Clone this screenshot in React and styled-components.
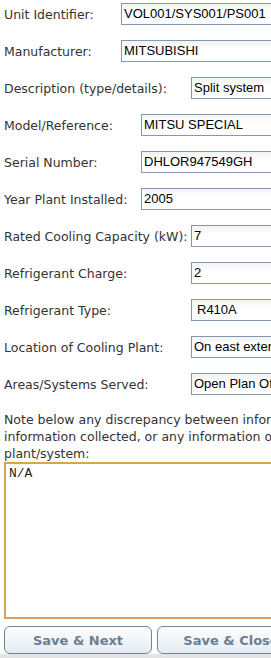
import React from 'react'
import styled, { createGlobalStyle } from 'styled-components'

const GlobalStyle = createGlobalStyle`
html, body {
  margin: 0;
  padding: 0;
  background: #fff;
  overflow: hidden;
}
body {
  font-family: "DejaVu Sans", Verdana, sans-serif;
  color: #333;
}
`

const fields = [
  { label: 'Unit Identifier:', value: 'VOL001/SYS001/PS001', at: 121 },
  { label: 'Manufacturer:', value: 'MITSUBISHI', at: 121 },
  { label: 'Description (type/details):', value: 'Split system', at: 191 },
  { label: 'Model/Reference:', value: 'MITSU SPECIAL', at: 141 },
  { label: 'Serial Number:', value: 'DHLOR947549GH', at: 141 },
  { label: 'Year Plant Installed:', value: '2005', at: 141 },
  { label: 'Rated Cooling Capacity (kW):', value: '7', at: 191 },
  { label: 'Refrigerant Charge:', value: '2', at: 191 },
  { label: 'Refrigerant Type:', value: 'R410A', at: 191, pad: 5 },
  { label: 'Location of Cooling Plant:', value: 'On east external wall', at: 191 },
  { label: 'Areas/Systems Served:', value: 'Open Plan Office', at: 191 }
]

export default function App () {
  return (
    <Page>
      <GlobalStyle />
      <Form>
        <Rows>
          {fields.map(f => (
            <Row key={f.label}>
              <Label width={f.at}>{f.label}</Label>
              <Field pad={f.pad}>{f.value}</Field>
            </Row>
          ))}
        </Rows>
        <Note>
          Note below any discrepancy between information provided and<br />
          information collected, or any information of relevance to this<br />
          plant/system:
        </Note>
        <Notes defaultValue='N/A' />
        <Buttons>
          <Button>Save &amp; Next</Button>
          <Button>Save &amp; Close</Button>
        </Buttons>
      </Form>
      <Footer />
    </Page>
  )
}

const Page = styled.div`
width: 271px;
height: 658px;
overflow: hidden;
display: flex;
flex-direction: column;
`
const Form = styled.div`
padding: 3px 0 0 4px;
width: 460px;
flex: 1;
`
const Rows = styled.div`
display: flex;
flex-direction: column;
gap: 15px;
`
const Row = styled.div`
display: flex;
align-items: center;
height: 22px;
`
const Label = styled.span`
width: ${props => props.width - 4}px;
flex-shrink: 0;
font-size: 12.5px;
color: #333;
white-space: nowrap;
`
const Field = styled.div`
width: 220px;
height: 22px;
box-sizing: border-box;
border: 1px solid #8399b1;
background: linear-gradient(#f3f3f3, #fff 40%);
font-family: "Liberation Sans", Arial, sans-serif;
font-size: 13px;
color: #000;
line-height: 20px;
padding-left: ${props => props.pad || 2}px;
white-space: nowrap;
overflow: hidden;
`
const Note = styled.p`
margin: 16px 0 0;
font-size: 12.5px;
line-height: 17px;
color: #333;
white-space: nowrap;
`
const Notes = styled.textarea`
display: block;
box-sizing: border-box;
width: 380px;
height: 157px;
margin: 0;
border: 2px solid #d8a54c;
padding: 2px 3px;
font-family: "Liberation Mono", "Courier New", monospace;
font-size: 13px;
color: #222;
resize: none;
outline: none;
`
const Buttons = styled.div`
display: flex;
gap: 5px;
margin-top: 7px;
`
const Button = styled.button`
width: 148px;
height: 28px;
flex-shrink: 0;
border: 1px solid #6f8598;
border-radius: 6px;
background: linear-gradient(#fdfdfe, #e6ecf2);
font-family: "DejaVu Sans", Verdana, sans-serif;
font-weight: bold;
font-size: 13px;
color: #6a7f94;
cursor: pointer;
`
const Footer = styled.div`
height: 4px;
background: #e4e4e4;
`
